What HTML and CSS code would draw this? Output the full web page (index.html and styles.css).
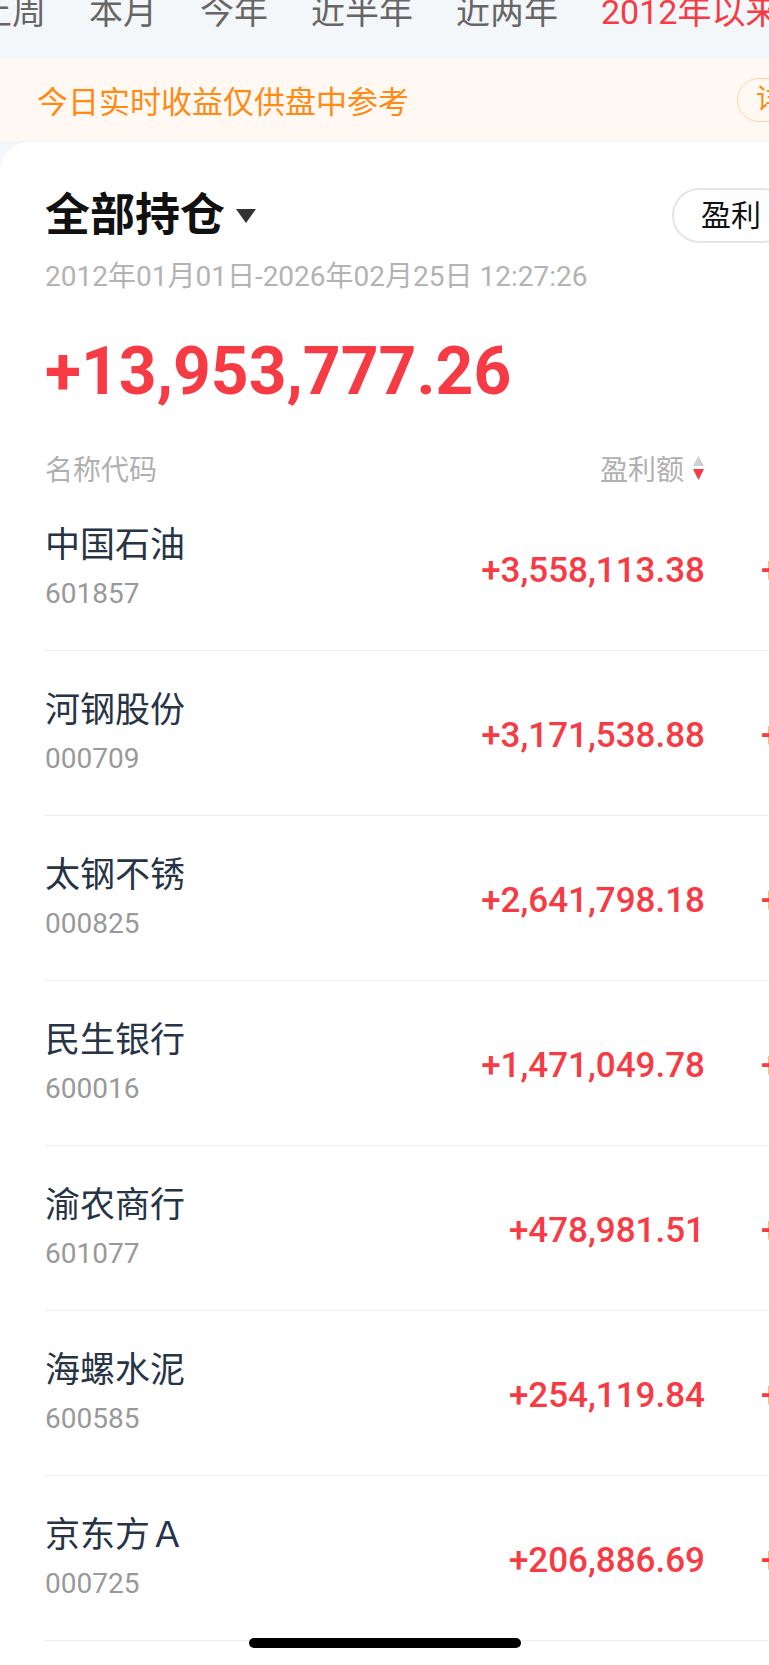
FILE: index.html
```html
<!DOCTYPE html>
<html lang="zh-CN">
  <head>
    <meta charset="UTF-8" />
    <meta name="viewport" content="width=device-width, initial-scale=1.0" />

    <link rel="stylesheet" href="styles.css">

    <title>持仓盈亏</title>
  </head>
  <body>
    <div class="page">
      <div class="tabs">
        <div class="tabs-row">
          <span class="tab">上周</span>
          <span class="tab">本月</span>
          <span class="tab">今年</span>
          <span class="tab">近半年</span>
          <span class="tab">近两年</span>
          <span class="tab active">2012年以来</span>
        </div>
      </div>

      <div class="notice">
        <span class="notice-text">今日实时收益仅供盘中参考</span>
        <span class="notice-btn">详情</span>
      </div>

      <div class="card">
        <div class="card-head">
          <div class="title">全部持仓<span class="caret"></span></div>
          <div class="pill">盈利</div>
        </div>
        <div class="range">2012年01月01日-2026年02月25日 12:27:26</div>
        <div class="total">+13,953,777.26</div>

        <div class="list-head grid">
          <span>名称代码</span>
          <span class="col-amount">
            盈利额
            <svg class="sort" width="13" height="26" viewBox="0 0 13 26">
              <path d="M6.5 1 L12 11 L1 11 Z" fill="#cfcfcf" />
              <path d="M1 14 L12 14 L6.5 25 Z" fill="#f63b45" />
            </svg>
          </span>
          <span></span>
        </div>

        <div class="row grid">
          <div class="stock"><div class="name">中国石油</div><div class="code">601857</div></div>
          <div class="amount">+3,558,113.38</div>
          <div class="rate">+86.42%</div>
        </div>
        <div class="row grid">
          <div class="stock"><div class="name">河钢股份</div><div class="code">000709</div></div>
          <div class="amount">+3,171,538.88</div>
          <div class="rate">+64.17%</div>
        </div>
        <div class="row grid">
          <div class="stock"><div class="name">太钢不锈</div><div class="code">000825</div></div>
          <div class="amount">+2,641,798.18</div>
          <div class="rate">+52.30%</div>
        </div>
        <div class="row grid">
          <div class="stock"><div class="name">民生银行</div><div class="code">600016</div></div>
          <div class="amount">+1,471,049.78</div>
          <div class="rate">+31.05%</div>
        </div>
        <div class="row grid">
          <div class="stock"><div class="name">渝农商行</div><div class="code">601077</div></div>
          <div class="amount">+478,981.51</div>
          <div class="rate">+18.76%</div>
        </div>
        <div class="row grid">
          <div class="stock"><div class="name">海螺水泥</div><div class="code">600585</div></div>
          <div class="amount">+254,119.84</div>
          <div class="rate">+9.83%</div>
        </div>
        <div class="row grid">
          <div class="stock"><div class="name">京东方Ａ</div><div class="code">000725</div></div>
          <div class="amount">+206,886.69</div>
          <div class="rate">+7.21%</div>
        </div>
      </div>

      <div class="home-bar"></div>
    </div>
  </body>
</html>
```

FILE: styles.css
```css
body {
  margin: 0;
  background: #f4f7fa;
  font-family: Roboto, "Noto Sans CJK SC", sans-serif;
  overflow: hidden;
}
.page {
  position: relative;
  width: 769px;
  height: 1665px;
  overflow: hidden;
}

/* period tabs, scrolled to the right */
.tabs {
  height: 58px;
  overflow: hidden;
  background: #f4f7fa;
}
.tabs-row {
  display: flex;
  gap: 43px;
  margin-top: -5px;
  margin-left: -22px;
  font-size: 34px;
  line-height: 34px;
  color: #666;
  white-space: nowrap;
}
.tab.active {
  color: #f63b45;
}

.notice {
  display: flex;
  align-items: center;
  height: 83px;
  padding-left: 37px;
  background: #fff8f3;
  white-space: nowrap;
}
.notice-text {
  width: 700px;
  flex: none;
  font-size: 31px;
  color: #ff8a14;
}
.notice-btn {
  flex: none;
  height: 42px;
  line-height: 42px;
  padding: 0 18px;
  border: 1.5px solid #ffd2a6;
  border-radius: 23px;
  font-size: 28px;
  color: #ff8a14;
}

.card {
  margin-top: 1px;
  padding-left: 45px;
  background: #fff;
  border-top-left-radius: 30px;
  height: 1600px;
}
.card-head {
  display: flex;
  align-items: center;
  padding-top: 46px;
  white-space: nowrap;
}
.title {
  display: flex;
  align-items: center;
  width: 627px;
  flex: none;
  font-size: 45px;
  line-height: 55px;
  font-weight: 700;
  color: #111;
}
.caret {
  margin-left: 11px;
  width: 0;
  height: 0;
  border-left: 10px solid transparent;
  border-right: 10px solid transparent;
  border-top: 14px solid #333;
}
.pill {
  flex: none;
  height: 51px;
  line-height: 51px;
  padding: 0 27px;
  border: 2px solid #e3e5e8;
  border-radius: 28px;
  font-size: 30px;
  color: #111;
}

.range {
  margin-top: 16px;
  font-size: 28px;
  line-height: 36px;
  color: #b3b3b3;
}
.total {
  margin-top: 35px;
  font-size: 66px;
  font-weight: 700;
  line-height: 84px;
  color: #f63b45;
}

.grid {
  display: grid;
  grid-template-columns: 344px 260px 200px;
  column-gap: 56px;
  align-items: center;
  white-space: nowrap;
}
.list-head {
  margin-top: 34px;
  height: 38px;
  font-size: 28px;
  color: #b0b0b0;
}
.col-amount {
  display: flex;
  align-items: center;
  justify-content: flex-end;
  gap: 8px;
}

.row {
  height: 160px;
  padding-top: 4px;
  border-bottom: 1px solid #ededed;
}
.name {
  font-size: 35px;
  line-height: 48px;
  color: #263445;
}
.code {
  font-size: 28px;
  line-height: 48px;
  color: #999;
}
.amount {
  text-align: right;
  font-size: 35px;
  font-weight: 500;
  color: #f63b45;
}
.rate {
  font-size: 35px;
  font-weight: 500;
  color: #f63b45;
}

.home-bar {
  position: absolute;
  left: 50%;
  bottom: 17px;
  width: 272px;
  height: 10px;
  margin-left: -136px;
  border-radius: 5px;
  background: #000;
}
```
